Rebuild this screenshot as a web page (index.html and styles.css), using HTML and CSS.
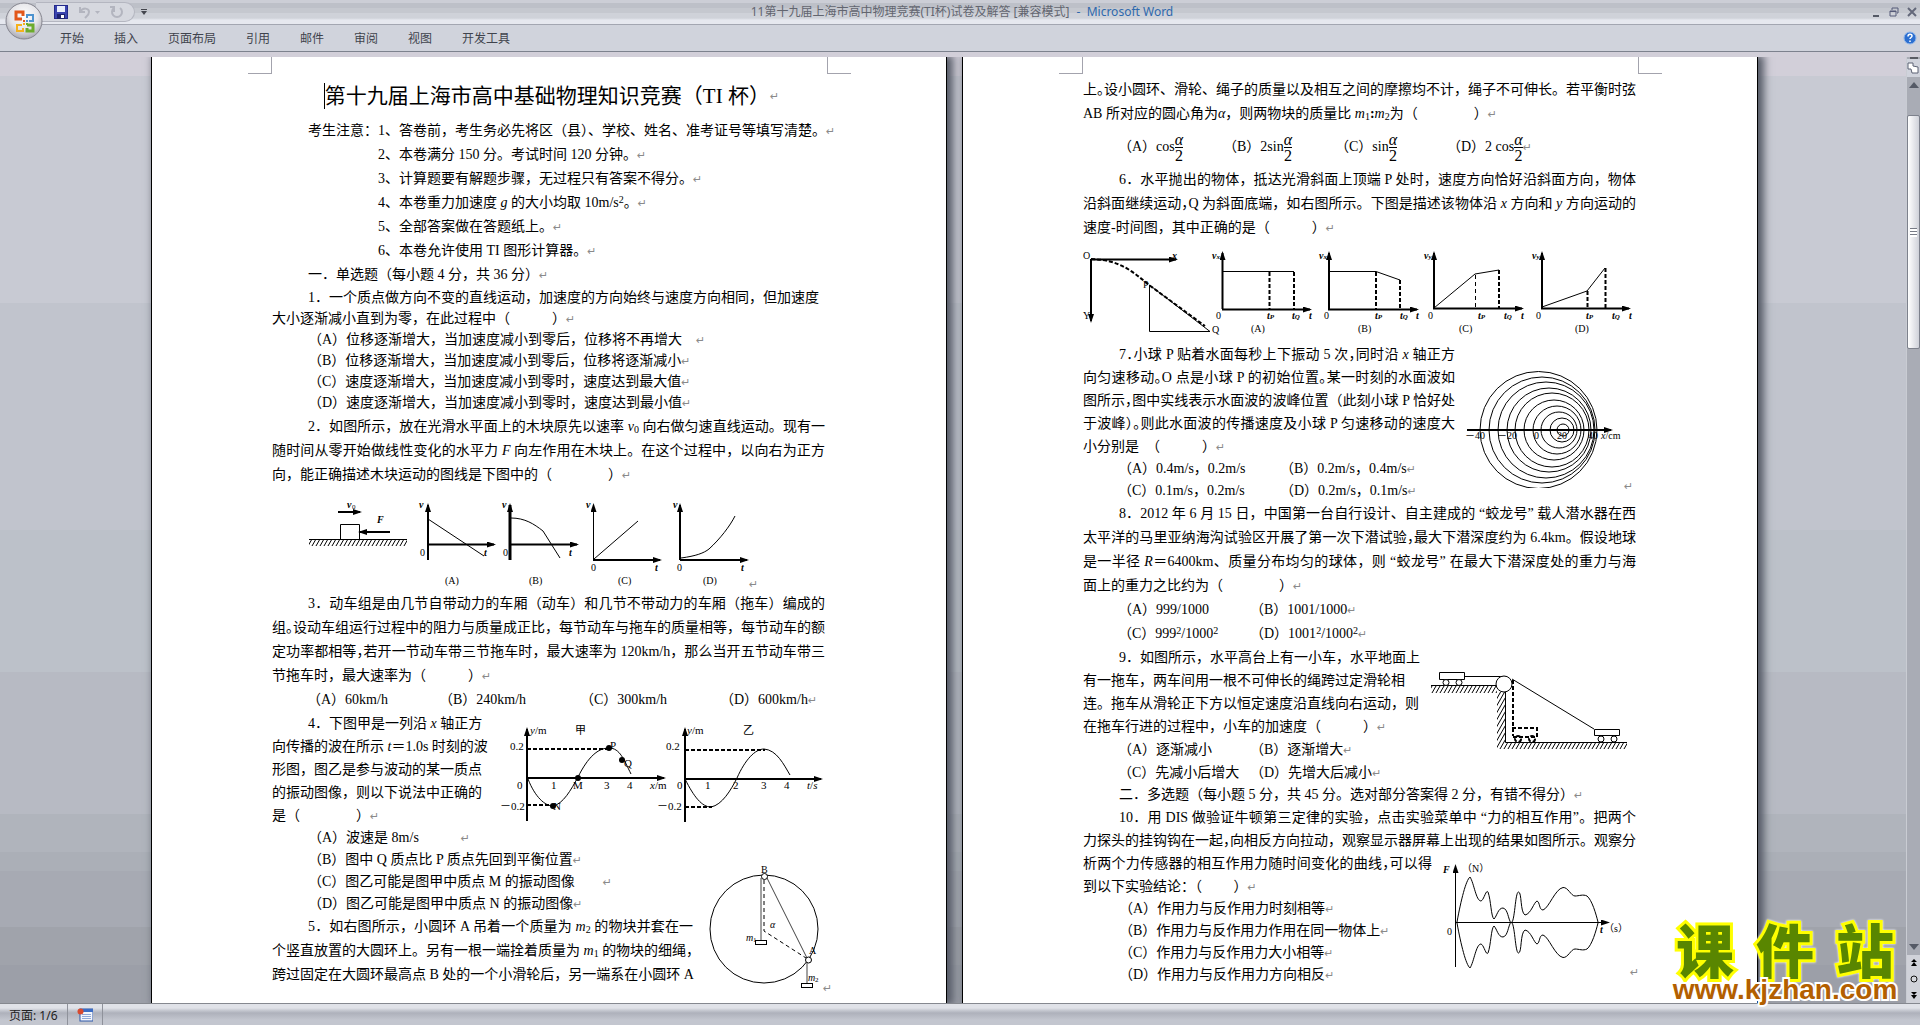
FILE: index.html
```html
<!DOCTYPE html>
<html lang="zh-CN">
<head>
<meta charset="utf-8">
<title>11第十九届上海市高中物理竞赛(TI杯)试卷及解答 - Microsoft Word</title>
<link rel="stylesheet" href="styles.css">
</head>
<body>
<svg class="defs" width="0" height="0" aria-hidden="true">
  <defs>
    <marker id="arrow" viewBox="0 0 9 6" refX="7" refY="3" markerWidth="9" markerHeight="6" markerUnits="userSpaceOnUse" orient="auto"><path d="M0 0L9 3L0 6z"/></marker>
    <pattern id="hatch" width="4" height="7" patternUnits="userSpaceOnUse"><path d="M0 7L4 0M-1 2L1 -2M3 9L5 5" stroke="#000" stroke-width="1"/></pattern>
  </defs>
</svg>

<header class="window-head">
  <button class="office" aria-label="Office 按钮">
    <svg viewBox="0 0 40 40" width="40" height="40">
      <defs>
        <radialGradient id="orb" cx="50%" cy="35%" r="65%"><stop offset="0" stop-color="#fff"/><stop offset=".6" stop-color="#e4e4e8"/><stop offset="1" stop-color="#a9a9b2"/></radialGradient>
      </defs>
      <circle cx="20" cy="20" r="18" fill="url(#orb)" stroke="#85858f"/>
      <g fill="none" stroke-width="3">
        <path d="M18 18h-6v-7h7v4" stroke="#e2571a"/>
        <path d="M23 17v-3h6v6h-4" stroke="#4d93cf" stroke-width="2"/>
        <path d="M18 24h-5v6h6v-3" stroke="#f5b11c" stroke-width="2"/>
        <path d="M23 24h6v6h-6v-3" stroke="#6cab2c"/>
      </g>
      <rect x="19" y="19" width="2" height="2" fill="#e2571a"/><rect x="22" y="19" width="2" height="2" fill="#4d93cf"/><rect x="19" y="22" width="2" height="2" fill="#f5b11c"/><rect x="22" y="22" width="2" height="2" fill="#6cab2c"/>
    </svg>
  </button>
  <div class="titlebar">
    <div class="quick">
      <button aria-label="保存"><svg viewBox="0 0 14 14" width="14" height="14"><rect x=".5" y=".5" width="13" height="13" fill="#3a44b0" stroke="#23298a"/><rect x="3" y="1" width="8" height="6" fill="#e8eefc"/><rect x="3" y="9" width="8" height="5" fill="#1d2270"/><rect x="7" y="10" width="3" height="3" fill="#fff"/></svg></button>
      <button aria-label="撤消"><svg viewBox="0 0 22 14" width="22" height="14"><path d="M2 2v5h5M2 7c3-5 9-4 9 0 0 3-2 4-4 6" fill="none" stroke="#b3b5bf" stroke-width="2"/><path d="M17 6h5l-2.500 3z" fill="#b3b5bf"/></svg></button>
      <button aria-label="重复"><svg viewBox="0 0 14 14" width="14" height="14"><path d="M4 3a5 5 0 1 0 6 0M4 7V2H0" fill="none" stroke="#b3b5bf" stroke-width="2"/></svg></button>
    </div>
    <button class="quick-more" aria-label="自定义快速访问工具栏"><svg viewBox="0 0 6 6" width="6" height="6"><path d="M0 0h6v1H0zM0 2h6L3 6z" fill="#44464e"/></svg></button>
    <h1 class="caption">11第十九届上海市高中物理竞赛(TI杯)试卷及解答 [兼容模式] <span class="app">- &nbsp;Microsoft Word</span></h1>
    <div class="win-buttons">
      <button aria-label="最小化"><svg viewBox="0 0 10 10" width="10" height="10"><path d="M2 8h6v2H2z" fill="#555a66"/></svg></button>
      <button aria-label="还原"><svg viewBox="0 0 10 10" width="10" height="10"><path d="M3 3V1h6v5H8M1 4h6v5H1zM1 4.500h6" fill="none" stroke="#555a78"/></svg></button>
      <button aria-label="关闭"><svg viewBox="0 0 10 10" width="10" height="10"><path d="M1 1l8 8M9 1L1 9" stroke="#63687a" stroke-width="2"/></svg></button>
    </div>
  </div>
  <nav class="ribbon" aria-label="功能区">
    <button>开始</button><button>插入</button><button>页面布局</button><button>引用</button><button>邮件</button><button>审阅</button><button>视图</button><button>开发工具</button>
    <button class="help" aria-label="帮助"><svg viewBox="0 0 14 14" width="14" height="14"><circle cx="7" cy="7" r="6" fill="#2c6fd0" stroke="#8fb5ea"/><path d="M5 5.500c0-3 4-3 4-.5 0 1.500-2 1.500-2 3M7 9.500v1.500" fill="none" stroke="#fff" stroke-width="1.500"/></svg></button>
  </nav>
</header>

<main class="workspace">
  <div class="pages">
    <article class="page">
      <i class="crop left"></i><i class="crop right"></i>
      <h2 class="paper-title end"><span class="caret"></span>第十九届上海市高中基础物理知识竞赛（TI 杯）</h2>

      <div class="notes">
        <p class="end">考生注意：1、答卷前，考生务必先将区（县）、学校、姓名、准考证号等填写清楚。</p>
        <p class="sub end">2、本卷满分 150 分。考试时间 120 分钟。</p>
        <p class="sub end">3、计算题要有解题步骤，无过程只有答案不得分。</p>
        <p class="sub end">4、本卷重力加速度 <i>g</i> 的大小均取 10m/s<sup>2</sup>。</p>
        <p class="sub end">5、全部答案做在答题纸上。</p>
        <p class="sub end">6、本卷允许使用 TI 图形计算器。</p>
        <p class="end">一．单选题（每小题 4 分，共 36 分）</p>
      </div>

      <section class="q tight">
        <p class="first">1．一个质点做方向不变的直线运动，加速度的方向始终与速度方向相同，但加速度</p>
        <p class="end">大小逐渐减小直到为零，在此过程中（　　　）</p>
        <p class="first end">（A）位移逐渐增大，当加速度减小到零后，位移将不再增大　</p>
        <p class="first end">（B）位移逐渐增大，当加速度减小到零后，位移将逐渐减小</p>
        <p class="first end">（C）速度逐渐增大，当加速度减小到零时，速度达到最大值</p>
        <p class="first end">（D）速度逐渐增大，当加速度减小到零时，速度达到最小值</p>
      </section>

      <section class="q">
        <p class="first full">2．如图所示，放在光滑水平面上的木块原先以速率 <i>v</i><sub>0</sub> 向右做匀速直线运动。现有一</p>
        <p class="full">随时间从零开始做线性变化的水平力 <i>F</i> 向左作用在木块上。在这个过程中，以向右为正方</p>
        <p class="end">向，能正确描述木块运动的图线是下图中的（　　　　）</p>
        <svg class="fig" viewBox="272 487 554 105" width="554" height="105">
          <rect x="309" y="539" width="98" height="7" fill="url(#hatch)"/>
          <path class="ln" d="M309 539.500H407M340.500 539V524.500H359.500V539"/>
          <path class="ax" d="M390 532H360" marker-end="url(#arrow)"/>
          <path class="ax" d="M338 512H360" marker-end="url(#arrow)"/>
          <path class="ax" d="M428 560V505" marker-end="url(#arrow)"/><path class="ax" d="M428 544.500H494" marker-end="url(#arrow)"/>
          <path class="ln" d="M428 519L484 556"/>
          <path class="ax bold" d="M510 560V505" marker-end="url(#arrow)"/><path class="ax" d="M510 544.500H577" marker-end="url(#arrow)"/>
          <path class="ln" d="M511 518C525 518 534 524 543 531L560 558"/>
          <path class="ln" d="M593.500 560V505" marker-end="url(#arrow)"/><path class="ax" d="M593 560H660" marker-end="url(#arrow)"/>
          <path class="ln" d="M594 559L638 521"/>
          <path class="ax" d="M680 560V505" marker-end="url(#arrow)"/><path class="ax" d="M680 560H747" marker-end="url(#arrow)"/>
          <path class="ln" d="M681 558C696 556 704 553 709 549C720 539 730 526 735 516"/>
          <g class="it"><text x="347" y="508">v</text><text x="377" y="523">F</text><text x="419" y="508">v</text><text x="502" y="508">v</text><text x="586" y="508">v</text><text x="673" y="508">v</text><text x="484" y="556">t</text><text x="569" y="556">t</text><text x="655" y="571">t</text><text x="741" y="571">t</text></g>
          <g><text class="tiny" x="352" y="509">0</text><text x="420" y="556">0</text><text x="503" y="556">0</text><text x="591" y="571">0</text><text x="677" y="571">0</text></g>
          <g><text x="445" y="584">(A)</text><text x="529" y="584">(B)</text><text x="618" y="584">(C)</text><text x="703" y="584">(D)</text></g>
          <text class="mark" x="749" y="588">↵</text>
        </svg>
      </section>

      <section class="q">
        <p class="first full">3．动车组是由几节自带动力的车厢（动车）和几节不带动力的车厢（拖车）编成的</p>
        <p class="full">组<span class="half">。</span>设动车组运行过程中的阻力与质量成正比，每节动车与拖车的质量相等，每节动车的额</p>
        <p class="full">定功率都相等<span class="half">，</span>若开一节动车带三节拖车时，最大速率为 120km/h，那么当开五节动车带三</p>
        <p class="end">节拖车时，最大速率为（　　　）</p>
        <div class="opts four"><span>（A）60km/h</span><span>（B）240km/h</span><span>（C）300km/h</span><span class="end">（D）600km/h</span></div>
      </section>

      <section class="q mid beside q4">
        <div>
          <p class="first">4．下图甲是一列沿 <i>x</i> 轴正方</p>
          <p>向传播的波在所示 <i>t</i>＝1.0s 时刻的波</p>
          <p>形图，图乙是参与波动的某一质点</p>
          <p>的振动图像，则以下说法中正确的</p>
          <p class="end">是（　　　　）</p>
        </div>
        <svg class="fig" viewBox="488 712 338 115" width="338" height="115">
          <path class="ax" d="M527 821V729" marker-end="url(#arrow)"/><path class="ax" d="M527 778H664" marker-end="url(#arrow)"/>
          <path class="ax" d="M685 822V729" marker-end="url(#arrow)"/><path class="ax" d="M685 779H821" marker-end="url(#arrow)"/>
          <path class="dash" d="M527 749H608M527 805H552M685 750H765M685 807H712"/>
          <path class="ln" d="M528 779C535 797 545 806 553 806C563 804 571 790 578 777C588 757 598 748 609 748C620 748 624 760 631 774"/>
          <path class="ln" d="M685 779C694 797 702 807 711 807C722 805 731 790 737 778C745 760 755 749 764 749C777 750 784 765 790 775"/>
          <circle cx="609" cy="748" r="3"/><circle cx="622" cy="760" r="3"/><circle cx="553" cy="806" r="3"/><circle cx="578" cy="778" r="3"/>
          <g class="big"><text x="530" y="734"><tspan class="i">y</tspan>/m</text><text x="575" y="734">甲</text><text x="510" y="750">0.2</text><text x="610" y="749">P</text><text x="624" y="767">Q</text><text x="517" y="789">0</text><text x="551" y="789">1</text><text x="573" y="789">M</text><text x="604" y="789">3</text><text x="627" y="789">4</text><text x="650" y="789"><tspan class="i">x</tspan>/m</text><text x="500" y="810">－0.2</text><text x="553" y="810">N</text>
          <text x="687" y="734"><tspan class="i">y</tspan>/m</text><text x="743" y="734">乙</text><text x="666" y="750">0.2</text><text x="677" y="789">0</text><text x="705" y="789">1</text><text x="733" y="789">2</text><text x="761" y="789">3</text><text x="784" y="789">4</text><text x="807" y="789"><tspan class="i">t</tspan>/<tspan class="i">s</tspan></text><text x="657" y="810">－0.2</text></g>
        </svg>
      </section>

      <section class="beside q5">
        <div>
          <div class="q short">
            <p class="first end">（A）波速是 8m/s　　　</p>
            <p class="first end">（B）图中 Q 质点比 P 质点先回到平衡位置</p>
            <p class="first end">（C）图乙可能是图甲中质点 M 的振动图像　　</p>
            <p class="first end">（D）图乙可能是图甲中质点 N 的振动图像</p>
          </div>
          <div class="q">
            <p class="first full">5．如右图所示，小圆环 A 吊着一个质量为 <i>m</i><sub>2</sub> 的物块并套在一</p>
            <p class="full">个竖直放置的大圆环上。另有一根一端拴着质量为 <i>m</i><sub>1</sub> 的物块的细绳，</p>
            <p class="full">跨过固定在大圆环最高点 B 处的一个小滑轮后，另一端系在小圆环 A</p>
          </div>
        </div>
        <svg class="fig" viewBox="696 827 130 160" width="130" height="160">
          <circle class="ln" cx="764" cy="929" r="54"/>
          <path class="gr" d="M761 878V940M767 878L807 958M807 963V983"/>
          <path class="dash thin" d="M764 880V931L806 958"/>
          <rect class="box" x="755.500" y="940.500" width="11" height="4"/><rect class="box" x="801.500" y="983.500" width="11" height="4"/>
          <circle class="box" cx="764.500" cy="876.500" r="3"/><circle class="box" cx="808.500" cy="960" r="3"/>
          <text x="761" y="873">B</text><text x="809" y="954">A</text><text class="i" x="770" y="928">α</text><text class="i" x="746" y="941">m</text><text class="tiny" x="753" y="942">1</text><text class="i" x="808" y="981">m</text><text class="tiny" x="815" y="982">2</text>
          <text class="mark" x="823" y="992">↵</text>
        </svg>
      </section>
    </article>

    <article class="page">
      <i class="crop left"></i><i class="crop right"></i>
      <section class="q">
        <p class="full">上<span class="half">。</span>设小圆环、滑轮、绳子的质量以及相互之间的摩擦均不计，绳子不可伸长。若平衡时弦</p>
        <p class="end">AB 所对应的圆心角为<i>α</i>，则两物块的质量比 <i>m</i><sub>1</sub><b>:</b><i>m</i><sub>2</sub>为（　　　　）</p>
        <div class="opts frac-row">
          <span>（A）cos<span class="frac"><i>α</i><span>2</span></span></span>
          <span>（B）2sin<span class="frac"><i>α</i><span>2</span></span></span>
          <span>（C）sin<span class="frac"><i>α</i><span>2</span></span></span>
          <span class="end">（D）2 cos<span class="frac"><i>α</i><span>2</span></span></span>
        </div>
      </section>

      <section class="q">
        <p class="first full">6．水平抛出的物体，抵达光滑斜面上顶端 P 处时，速度方向恰好沿斜面方向，物体</p>
        <p class="full">沿斜面继续运动<span class="half">，</span>Q 为斜面底端，如右图所示。下图是描述该物体沿 <i>x</i> 方向和 <i>y</i> 方向运动的</p>
        <p class="end">速度-时间图，其中正确的是（　　　）</p>
        <svg class="fig" viewBox="1083 240 554 103" width="554" height="103">
          <path class="ax" d="M1091 259.500H1176" marker-end="url(#arrow)"/><path class="ax" d="M1091 259V321" marker-end="url(#arrow)"/>
          <path class="dash" d="M1091 259C1120 260 1132 271 1149 285L1205 326"/>
          <path class="ln" d="M1149.500 285L1210 331.500H1149.500z"/>
          <path class="ax" d="M1222.500 309V253" marker-end="url(#arrow)"/><path class="ax" d="M1222 309.500H1310" marker-end="url(#arrow)"/>
          <path class="ln" d="M1223 271.500H1294"/><path class="dash" d="M1269.500 272V309M1294 272V309"/>
          <path class="ax" d="M1329 309V253" marker-end="url(#arrow)"/><path class="ax" d="M1328 309.500H1417" marker-end="url(#arrow)"/>
          <path class="ln" d="M1329 271.500H1376L1400 280"/><path class="dash" d="M1376 272V309M1400 280V309"/>
          <path class="ax" d="M1434 309V253" marker-end="url(#arrow)"/><path class="ax" d="M1433 308.500H1522" marker-end="url(#arrow)"/>
          <path class="ln" d="M1434 308L1475 274L1499 270"/><path class="dash thin" d="M1475.500 275V308"/><path class="dash" d="M1499 270V308"/>
          <path class="ax" d="M1542 309V253" marker-end="url(#arrow)"/><path class="ax" d="M1541 308.500H1629" marker-end="url(#arrow)"/>
          <path class="ln" d="M1542 307L1587 291L1605 268"/><path class="dash" d="M1587.500 291V308M1605.500 268V308"/>
          <g><text x="1083" y="259">O</text><text x="1083" y="319">Y</text><text x="1143" y="288">P</text><text x="1212" y="333">Q</text>
          <text x="1216" y="319">0</text><text x="1324" y="319">0</text><text x="1428" y="319">0</text><text x="1536" y="319">0</text>
          <text x="1251" y="332">(A)</text><text x="1358" y="332">(B)</text><text x="1459" y="332">(C)</text><text x="1575" y="332">(D)</text></g>
          <g class="it"><text x="1172" y="259">x</text><text x="1212" y="259">v<tspan class="tiny">x</tspan></text><text x="1319" y="259">v<tspan class="tiny">x</tspan></text><text x="1424" y="259">v<tspan class="tiny">y</tspan></text><text x="1532" y="259">v<tspan class="tiny">y</tspan></text>
          <text x="1267" y="319">t<tspan class="tiny">P</tspan></text><text x="1292" y="319">t<tspan class="tiny">Q</tspan></text><text x="1309" y="319">t</text>
          <text x="1375" y="319">t<tspan class="tiny">P</tspan></text><text x="1400" y="319">t<tspan class="tiny">Q</tspan></text><text x="1416" y="319">t</text>
          <text x="1478" y="319">t<tspan class="tiny">P</tspan></text><text x="1504" y="319">t<tspan class="tiny">Q</tspan></text><text x="1521" y="319">t</text>
          <text x="1586" y="319">t<tspan class="tiny">P</tspan></text><text x="1612" y="319">t<tspan class="tiny">Q</tspan></text><text x="1629" y="319">t</text></g>
        </svg>
      </section>

      <section class="beside q7">
        <div>
          <div class="q mid">
            <p class="first full">7<span class="half">．</span>小球 P 贴着水面每秒上下振动 5 次<span class="half">，</span>同时沿 <i>x</i> 轴正方</p>
            <p class="full">向匀速移动<span class="half">。</span>O 点是小球 P 的初始位置<span class="half">。</span>某一时刻的水面波如</p>
            <p class="full">图所示<span class="half">，</span>图中实线表示水面波的波峰位置（此刻小球 P 恰好处</p>
            <p class="full">于波峰）<span class="half">。</span>则此水面波的传播速度及小球 P 匀速移动的速度大</p>
            <p class="end">小分别是　（　　　）</p>
          </div>
          <div class="q short">
            <div class="opts two wide"><span>（A）0.4m/s，0.2m/s</span><span class="end">（B）0.2m/s，0.4m/s</span></div>
            <div class="opts two wide"><span>（C）0.1m/s，0.2m/s</span><span class="end">（D）0.2m/s，0.1m/s</span></div>
          </div>
        </div>
        <svg class="fig" viewBox="1455 343 182 159" width="182" height="159">
          <clipPath id="pond"><rect x="1470" y="365" width="140" height="123"/></clipPath>
          <g class="ln" clip-path="url(#pond)"><circle cx="1538.500" cy="430" r="58.500"/><circle cx="1542" cy="430" r="53"/><circle cx="1546" cy="430" r="48"/><circle cx="1549" cy="430" r="42"/><circle cx="1552" cy="430" r="37"/><circle cx="1554" cy="430" r="30"/><circle cx="1557" cy="430" r="24"/><circle cx="1559" cy="430" r="18"/><circle cx="1562" cy="430" r="12"/><circle cx="1563" cy="430" r="6"/></g>
          <path class="ax" d="M1467 430H1611" marker-end="url(#arrow)"/>
          <g><text x="1465" y="439">－40</text><text x="1497" y="439">－20</text><text x="1534" y="439">0</text><text x="1557" y="439">20</text><text x="1588" y="439">40</text><text x="1601" y="439"><tspan class="i">x</tspan>/cm</text></g>
          <text class="mark" x="1624" y="490">↵</text>
        </svg>
      </section>

      <section class="q">
        <p class="first full">8．2012 年 6 月 15 日，中国第一台自行设计、自主建成的 “蛟龙号” 载人潜水器在西</p>
        <p class="full">太平洋的马里亚纳海沟试验区开展了第一次下潜试验<span class="half">，</span>最大下潜深度约为 6.4km。假设地球</p>
        <p class="full">是一半径 <i>R</i>＝6400km、质量分布均匀的球体，则 “蛟龙号” 在最大下潜深度处的重力与海</p>
        <p class="end">面上的重力之比约为（　　　　）</p>
        <div class="opts two"><span>（A）999/1000</span><span class="end">（B）1001/1000</span></div>
        <div class="opts two"><span>（C）999<sup>2</sup>/1000<sup>2</sup></span><span class="end">（D）1001<sup>2</sup>/1000<sup>2</sup></span></div>
      </section>

      <section class="beside q9">
        <div class="q mid">
          <p class="first">9．如图所示，水平高台上有一小车，水平地面上</p>
          <p>有一拖车，两车间用一根不可伸长的绳跨过定滑轮相</p>
          <p>连。拖车从滑轮正下方以恒定速度沿直线向右运动，则</p>
          <p class="end">在拖车行进的过程中，小车的加速度（　　　）</p>
          <div class="opts two"><span>（A）逐渐减小</span><span class="end">（B）逐渐增大</span></div>
          <div class="opts two"><span>（C）先减小后增大</span><span class="end">（D）先增大后减小</span></div>
        </div>
        <svg class="fig" viewBox="1420 646 218 138" width="218" height="138">
          <path fill="url(#hatch)" d="M1431 686H1497V693H1431zM1497 692H1505V742H1627V749H1497z"/>
          <path class="ln" d="M1431 685.500H1497M1505.500 692V742.500H1627M1464 676.500H1506M1512 679L1594 729"/>
          <path class="box" d="M1439.500 672.500h25v7h-25zM1594.500 729.500h25v6h-25z"/>
          <path class="dash" d="M1513 680V736M1512 728H1537V737H1512"/>
          <g class="box"><circle cx="1446" cy="682.500" r="3"/><circle cx="1459" cy="682.500" r="3"/><circle cx="1504" cy="684" r="8"/><circle cx="1601" cy="739" r="3"/><circle cx="1614" cy="739" r="3"/></g>
          <g class="dash"><circle cx="1518" cy="739" r="3"/><circle cx="1532" cy="739" r="3"/></g>
        </svg>
      </section>

      <div class="q short"><p class="first end">二．多选题（每小题 5 分，共 45 分。选对部分答案得 2 分，有错不得分）</p></div>
      <section class="q mid">
        <p class="first full">10．用 DIS 做验证牛顿第三定律的实验，点击实验菜单中 “力的相互作用”。把两个</p>
        <p class="full">力探头的挂钩钩在一起<span class="half">，</span>向相反方向拉动，观察显示器屏幕上出现的结果如图所示。观察分</p>
        <div class="beside q10">
          <div>
            <p class="full">析两个力传感器的相互作用力随时间变化的曲线<span class="half">，</span>可以得</p>
            <p class="end">到以下实验结论：（　　 ）</p>
            <div class="q short">
              <p class="first end">（A）作用力与反作用力时刻相等</p>
              <p class="first end">（B）作用力与反作用力作用在同一物体上</p>
              <p class="first end">（C）作用力与反作用力大小相等</p>
              <p class="first end">（D）作用力与反作用力方向相反</p>
            </div>
          </div>
          <svg class="fig" viewBox="1432 852 206 134" width="206" height="134">
            <path class="ln" d="M1455.500 967V866" marker-end="url(#arrow)"/><path class="ln" d="M1456 922.500H1608" marker-end="url(#arrow)"/>
            <path class="ln" d="M1457 922C1461 900 1466 880 1470 877C1474 883 1476 901 1481 901C1484 900 1486 889 1488 892C1491 900 1491 917 1494 919C1497 916 1498 908 1503 908C1508 909 1508 919 1511 923C1515 923 1515 892 1518.500 892C1522 892 1520 912 1525 915C1531 914 1534 902 1537 901C1540 902 1539 910 1543 910C1549 908 1555 889 1563 887.500C1568 887 1571 896 1575 896C1579 896 1583 894 1587 896C1592 900 1596 914 1598 922"/>
            <path class="ln" transform="translate(0 1845) scale(1 -1)" d="M1457 922C1461 900 1466 880 1470 877C1474 883 1476 901 1481 901C1484 900 1486 889 1488 892C1491 900 1491 917 1494 919C1497 916 1498 908 1503 908C1508 909 1508 919 1511 923C1515 923 1515 892 1518.500 892C1522 892 1520 912 1525 915C1531 914 1534 902 1537 901C1540 902 1539 910 1543 910C1549 908 1555 889 1563 887.500C1568 887 1571 896 1575 896C1579 896 1583 894 1587 896C1592 900 1596 914 1598 922"/>
            <g class="it"><text x="1443" y="873">F</text><text x="1600" y="933">t</text></g>
            <text x="1462" y="872">（N）</text><text x="1447" y="935">0</text><text x="1604" y="932">（s）</text>
            <text class="mark" x="1630" y="976">↵</text>
          </svg>
        </div>
      </section>
    </article>
  </div>

  <aside class="scroll" aria-label="滚动条">
    <i class="split"></i>
    <button class="ruler" aria-label="标尺"><svg viewBox="0 0 12 12" width="12" height="12"><path d="M1 1h5v3l5 1v6H5l-1-4H1z" fill="#fff" stroke="#5d6374"/></svg></button>
    <button class="up" aria-label="向上"><svg viewBox="0 0 10 6" width="10" height="6"><path d="M0 6L5 0L10 6z" fill="#555a66"/></svg></button>
    <div class="track"><i class="thumb"></i></div>
    <button class="down" aria-label="向下"><svg viewBox="0 0 10 6" width="10" height="6"><path d="M0 0L5 6L10 0z" fill="#555a66"/></svg></button>
    <button class="jump" aria-label="上一页"><svg viewBox="0 0 6 8" width="6" height="8"><path d="M3 0L6 3H0zM3 3L6 7H0z"/></svg></button>
    <button class="jump" aria-label="选择浏览对象"><svg viewBox="0 0 8 8" width="8" height="8"><circle cx="4" cy="4" r="3" fill="#d5d7dc" stroke="#111"/></svg></button>
    <button class="jump" aria-label="下一页"><svg viewBox="0 0 6 8" width="6" height="8"><path d="M3 4L6 1H0zM3 8L6 4H0z"/></svg></button>
  </aside>

  <div class="watermark">
    <div class="site"><span>课</span><span>件</span><span>站</span></div>
    <a class="url" href="#">www.kjzhan.com</a>
  </div>
</main>

<footer class="status">
  <button>页面: 1/6</button>
  <button aria-label="宏录制"><svg viewBox="0 0 16 14" width="16" height="14"><rect x="3" y="1" width="13" height="12" fill="#f3f6fc" stroke="#2c56a8"/><rect x="3" y="1" width="13" height="3" fill="#3b6cc4"/><path d="M5 6.500h9M5 8.500h9M5 10.500h9" stroke="#8fa9d8"/><circle cx="3.500" cy="3.500" r="3" fill="#d8492e"/></svg></button>
</footer>
</body>
</html>
```
FILE: styles.css
```css
* { box-sizing: border-box; }
body {
  margin: 0;
  height: 100vh;
  display: flex;
  flex-direction: column;
  overflow: hidden;
  font-family: "Noto Sans", "Noto Sans CJK SC", sans-serif;
  font-size: 12px;
  background: #d2cfd9;
}
p, h1, h2 { margin: 0; font-weight: 400; }
button { border: 0; padding: 0; background: none; font: inherit; color: inherit; }
svg { display: block; }
.defs { position: absolute; }

/* window frame */
.window-head { position: relative; flex: none; padding-bottom: 5px; }
.office { position: absolute; left: 4px; top: 1px; z-index: 1; }
.titlebar {
  height: 25px;
  display: grid;
  grid-template-columns: auto auto 1fr auto;
  align-items: center;
  padding: 0 2px 0 36px;
  border-bottom: 1px solid #a3a6b1;
  background: linear-gradient(#ccced6 0 3px, #bdc0c8 3px 8px, #c5c8cf 8px 13px, #cfd2d9 13px 18px, #e6e8ef 20px);
}
.quick {
  width: 99px;
  height: 20px;
  display: flex;
  align-items: center;
  gap: 10px;
  padding-left: 18px;
  border: 1px solid #b4b6c0;
  border-left: 0;
  border-radius: 0 10px 10px 0;
  background: #d6d8df;
}
.quick-more { margin-left: 6px; }
.caption { padding-right: 94px; text-align: center; font-size: 12px; line-height: 24px; color: #62656f; white-space: nowrap; }
.app { margin-left: 4px; color: #2e68ad; }
.win-buttons { display: flex; gap: 8px; padding-right: 1px; }
.ribbon {
  height: 27px;
  display: flex;
  align-items: center;
  gap: 30px;
  padding: 0 3px 0 60px;
  background: #d0d3dc;
  border-bottom: 1px solid #7d828e;
  color: #3f434d;
}
.help { margin-left: auto; }

/* document area */
.workspace {
  position: relative;
  flex: 1;
  min-height: 0;
  display: flex;
  background: linear-gradient(#d2cfd9 0 2%, #c8cad3 2% 26%, #c1c4cd 26% 50%, #bcc1c9 50% 65%, #b7bac3 65% 80%, #b0b4bc 80% 84%, #abafb7 84% 86%, #a7aab3 86% 92%, #a0a3ab 92% 96%, #9c9fa8 96%);
}
.pages { flex: 1; display: flex; justify-content: center; gap: 15px; padding-left: 3px; overflow: hidden; }
.page {
  position: relative;
  flex: none;
  width: 796px;
  padding: 21px 121px 0 120px;
  border: solid #000;
  border-width: 0 1px;
  background: #fff;
  box-shadow: 4px 0 8px 2px #555a66;
  font: 14px/24px "Liberation Serif", "Noto Sans CJK SC", serif;
  color: #000;
  white-space: nowrap;
}
.crop { position: absolute; top: 0; width: 24px; height: 17px; border-bottom: 1px solid #a3a3ad; }
.crop.left { left: 96px; border-right: 1px solid #a3a3ad; }
.crop.right { right: 95px; border-left: 1px solid #a3a3ad; }

.paper-title { display: flex; align-items: center; justify-content: center; font-size: 21px; line-height: 36px; margin-bottom: 5px; padding-left: 6px; }
.caret { width: 1px; height: 26px; background: #000; }
.end::after { content: "↵"; font: 11px/1 "DejaVu Sans", sans-serif; color: #8a8a8a; }
.full { text-align: justify; text-align-last: justify; }
.half { font-feature-settings: "halt"; }
.first { padding-left: 36px; }
.notes { padding-left: 36px; }
.sub { padding-left: 70px; }
.q { line-height: 24px; }
.q.tight { line-height: 21px; padding-bottom: 2px; }
.q.mid { line-height: 23px; }
.q.short { line-height: 22px; }
sup, sub { font-size: 10px; line-height: 0; }
sub { vertical-align: -2px; }
sup { vertical-align: 4px; }

.opts { display: grid; padding-left: 35px; }
.four { grid-template-columns: 132px 141px 140px auto; }
.two { grid-template-columns: 132px auto; }
.two.wide { grid-template-columns: 162px auto; }
.frac-row { grid-template-columns: 105px 112px 112px auto; line-height: 42px; }
.frac { display: inline-flex; flex-direction: column; vertical-align: middle; line-height: 15px; font-size: 16px; text-align: center; }
.frac span { border-top: 1px solid #000; }

.beside { display: grid; }
.q4 { grid-template-columns: 216px 338px; }
.q5 { grid-template-columns: 424px 130px; }
.q5 .full { width: 421px; }
.q7 { grid-template-columns: 372px 182px; }
.q9 { grid-template-columns: 337px 218px; }
.q10 { grid-template-columns: 349px 206px; }

/* figures */
.fig { overflow: visible; font-size: 10px; }
.fig .big { font-size: 11px; }
.fig .it, .fig .i { font-style: italic; }
.fig .it { font-weight: 700; }
.fig .tiny { font-size: 7px; }
.fig .mark { font: 11px "DejaVu Sans", sans-serif; fill: #8a8a8a; }
.ln { fill: none; stroke: #000; stroke-width: 1; }
.ax { fill: none; stroke: #000; stroke-width: 2; }
.ax.bold { stroke-width: 3; }
.gr { fill: none; stroke: #444; stroke-width: 1; }
.dash { fill: none; stroke: #000; stroke-width: 2; stroke-dasharray: 4 2; }
.dash.thin { stroke-width: 1; stroke-dasharray: 4 3; }
.box { fill: #fff; stroke: #000; stroke-width: 1; }

/* scroll bar */
.scroll {
  flex: none;
  width: 14px;
  display: flex;
  flex-direction: column;
  align-items: center;
  border-left: 1px solid #c9ccd3;
  background: #a9acb5;
}
.split { width: 8px; height: 2px; background: #5a5c64; }
.ruler { height: 18px; width: 100%; background: #d0d3dc; }
.up { height: 16px; }
.up svg, .down svg, .jump svg { margin: auto; }
.track { flex: 1; width: 100%; padding-top: 22px; }
.thumb {
  display: block;
  height: 234px;
  border: 1px solid #7d818c;
  border-radius: 2px;
  background:
    repeating-linear-gradient(#777b86 0 1px, #fff 1px 3px) 2px 50% / 7px 9px no-repeat,
    linear-gradient(90deg, #fff, #cfd1d9);
}
.down { height: 16px; }
.jump { height: 16px; width: 100%; background: #d0d2d9; }

.watermark { position: absolute; right: 20px; bottom: 1px; width: 230px; text-align: center; }
.site {
  display: flex;
  justify-content: space-between;
  padding: 0 6px;
  margin-bottom: 6px;
  font: 900 58px/48px "Noto Sans CJK SC", sans-serif;
  color: #598600;
  -webkit-text-stroke: 6px #ff0;
  paint-order: stroke fill;
  filter: drop-shadow(0 0 1px #fff);
}
.url {
  position: relative;
  display: block;
  font: 700 28px/24px "Liberation Sans", sans-serif;
  color: #b35f00;
  text-decoration: none;
  -webkit-text-stroke: 4px #fff;
  paint-order: stroke fill;
}

/* status bar */
.status {
  flex: none;
  height: 22px;
  display: flex;
  border-top: 1px solid #85888f;
  background: linear-gradient(#e0e2e8 0 4px, #c9ccd4 6px, #aeb1bb 9px, #c3c6cf 16px);
  color: #222;
}
.status button { padding: 0 9px; border-right: 1px solid #8f929b; }
```
